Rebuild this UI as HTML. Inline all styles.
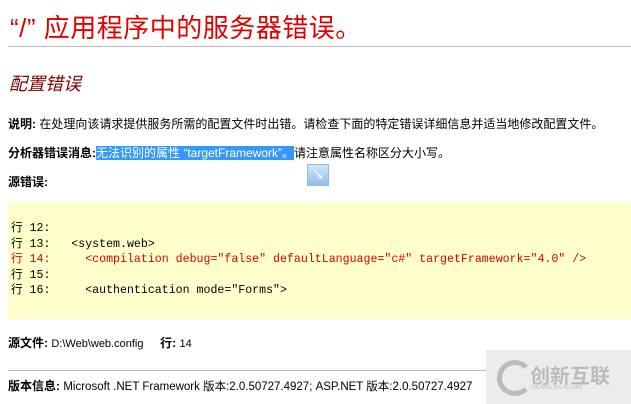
<!DOCTYPE html>
<html><head><meta charset="utf-8"><style>
body{margin:0;width:631px;height:404px;background:#fff;position:relative;overflow:hidden;font-family:"Liberation Sans","Noto Sans CJK SC",sans-serif;}
.a{position:absolute;white-space:nowrap;}
h1{position:absolute;left:10px;top:8px;margin:0;font-weight:normal;font-size:26px;letter-spacing:0.5px;color:#e00000;}
.hr{position:absolute;left:8px;right:0;top:46px;height:1px;background:#bbb;}
h2{position:absolute;left:9px;top:70px;margin:0;font-weight:normal;font-style:italic;font-size:18px;color:#800000;}
.t{font-size:12px;color:#000;}
b{font-weight:bold;}
.code{position:absolute;left:8px;top:202px;width:623px;height:117px;background:#ffffcc;}
.code pre{margin:0;position:absolute;left:3px;top:19px;font-family:"Liberation Mono","Noto Sans CJK SC",monospace;font-size:11.6px;line-height:15.5px;color:#000;}
.r{color:#e00000}
</style></head><body>
<h1>“/” 应用程序中的服务器错误。</h1>
<div class="hr"></div>
<h2>配置错误</h2>
<div class="a t" style="left:8px;top:115px"><b>说明:</b> 在处理向该请求提供服务所需的配置文件时出错。请检查下面的特定错误详细信息并适当地修改配置文件。</div>
<div class="a t" style="left:8px;top:144px"><b>分析器错误消息:</b><span style="background:#3399ff;color:#fff">无法识别的属性 “targetFramework”。</span>请注意属性名称区分大小写。</div>
<div class="a t" style="left:8px;top:173px"><b>源错误:</b></div>
<div class="a" style="left:307px;top:164px;width:20px;height:20px;background:linear-gradient(#cfe6fb,#8fbfe8);border:1px solid #9bc;color:#fff;font-size:13px;text-align:center;line-height:20px">↘</div>
<div class="code"><pre>行 12:
行 13:   &lt;system.web&gt;
<span class="r">行 14:     &lt;compilation debug="false" defaultLanguage="c#" targetFramework="4.0" /&gt;</span>
行 15:
行 16:     &lt;authentication mode="Forms"&gt;</pre></div>
<div class="a t" style="left:8px;top:334px"><b>源文件:</b> <span style="font-size:11px">D:\Web\web.config</span> &nbsp;&nbsp;&nbsp; <b>行:</b> <span style="font-size:11px">14</span></div>
<div class="a" style="left:8px;top:370px;width:480px;height:1px;background:#bbb"></div>
<div class="a t" style="left:8px;top:377px"><b>版本信息:</b> <span style="font-size:11.5px">Microsoft .NET Framework 版本:2.0.50727.4927; ASP.NET 版本:2.0.50727.4927</span></div>
<div class="a" style="left:486px;top:350px;width:145px;height:54px;background:#ececec"></div>
<div class="a" style="left:497px;top:360px;width:26px;height:26px;border:5px solid #bbb;border-radius:50%;border-right-color:transparent"></div>
<div class="a" style="left:530px;top:360px;font-size:20px;color:#bbb;font-weight:bold">创新互联</div>
<div class="a" style="left:530px;top:385px;font-size:5px;color:#bbb">CHUANG XIN HU LIAN</div>
</body></html>
